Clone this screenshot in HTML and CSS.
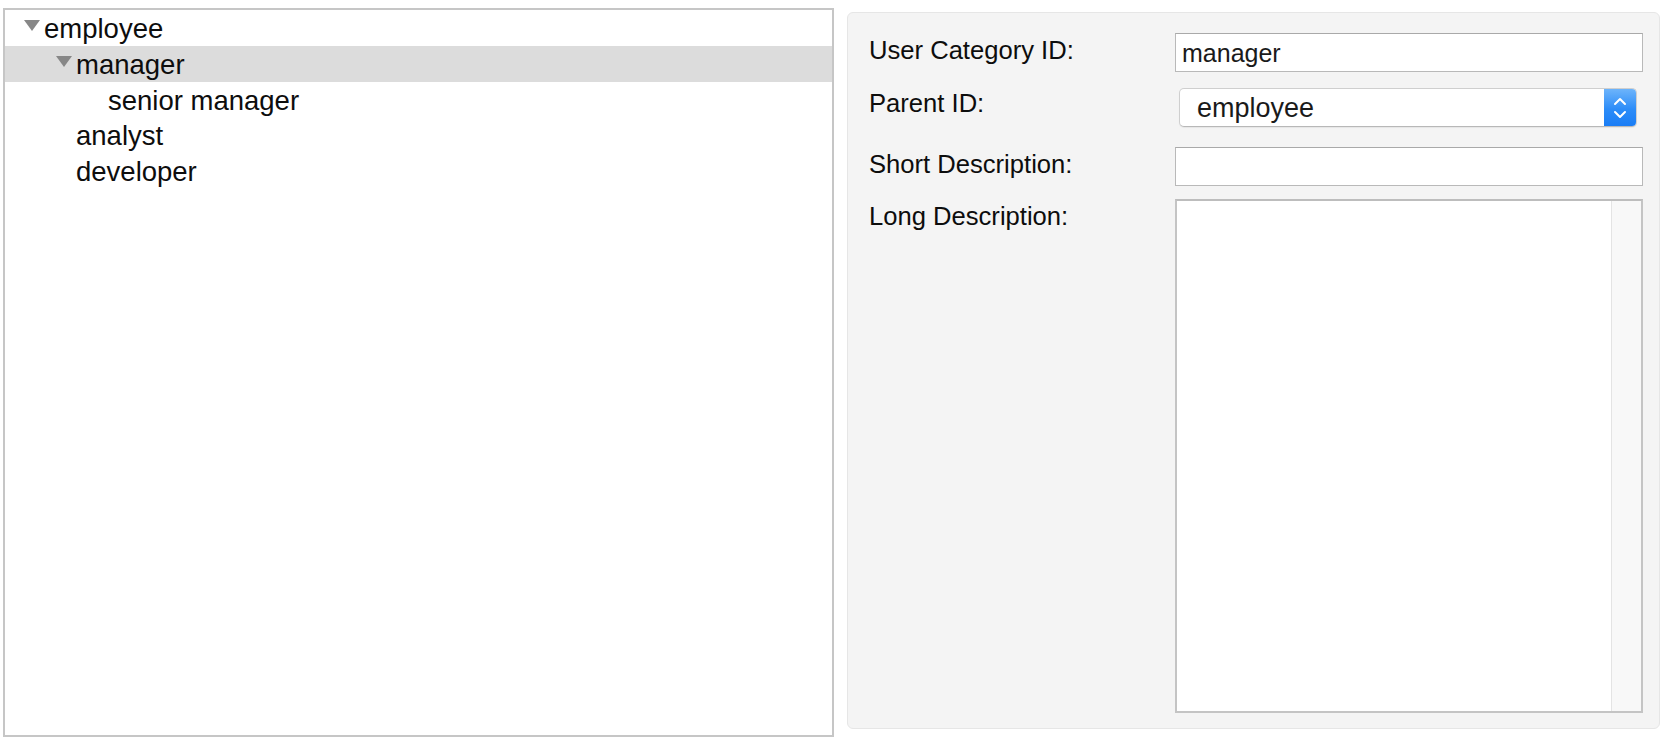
FILE: index.html
```html
<!DOCTYPE html>
<html>
<head>
<meta charset="utf-8">
<link rel="stylesheet" href="styles.css">
</head>
<body>
<div class="app">
  <div class="tree">
    <div class="row lvl0"><span class="disc open"></span><span class="label">employee</span></div>
    <div class="row lvl1 selected"><span class="disc open"></span><span class="label">manager</span></div>
    <div class="row lvl2"><span class="disc"></span><span class="label">senior manager</span></div>
    <div class="row lvl1"><span class="disc"></span><span class="label">analyst</span></div>
    <div class="row lvl1"><span class="disc"></span><span class="label">developer</span></div>
  </div>
  <div class="panel">
    <div class="form">
      <div class="flabel">User Category ID:</div>
      <div class="field f1"><div class="input">manager</div></div>

      <div class="flabel">Parent ID:</div>
      <div class="field f2">
        <div class="select">
          <span class="sel-text">employee</span>
          <span class="sel-btn">
            <svg width="14" height="26" viewBox="0 0 14 26"><path d="M2 9 L7 4 L12 9" fill="none" stroke="#fff" stroke-width="2" stroke-linecap="round" stroke-linejoin="round"/><path d="M2 17 L7 22 L12 17" fill="none" stroke="#fff" stroke-width="2" stroke-linecap="round" stroke-linejoin="round"/></svg>
          </span>
        </div>
      </div>

      <div class="flabel">Short Description:</div>
      <div class="field f3"><div class="input"></div></div>

      <div class="flabel">Long Description:</div>
      <div class="field f4"><div class="textarea"><div class="ta-body"></div><div class="ta-scroll"></div></div></div>
    </div>
  </div>
</div>
</body>
</html>
```
FILE: styles.css
```css
html, body {
  margin: 0;
  padding: 0;
  background: #ffffff;
  font-family: "Liberation Sans", Arial, Helvetica, sans-serif;
  color: #0d0d0d;
}

.app {
  display: flex;
  align-items: flex-start;
  gap: 13px;
  padding: 8px 0 0 3px;
}

.tree {
  box-sizing: border-box;
  width: 831px;
  height: 729px;
  border: 2px solid #c6c6c6;
  background: #ffffff;
}

.row {
  display: flex;
  align-items: center;
  height: 35.8px;
  font-size: 27.5px;
  color: #0d0d0d;
}

.row.lvl0 { padding-left: 19px; }
.row.lvl1 { padding-left: 51px; }
.row.lvl2 { padding-left: 83px; }

.row.selected { background: #dcdcdc; }

.disc {
  display: inline-block;
  width: 20px;
  height: 10px;
  flex: none;
}

.disc.open {
  width: 0;
  height: 0;
  border-left: 8px solid transparent;
  border-right: 8px solid transparent;
  border-top: 11px solid #878787;
  margin-right: 4px;
  margin-top: -5px;
}

.label {
  line-height: 35px;
  margin-top: 1px;
}

.panel {
  box-sizing: border-box;
  margin-top: 4px;
  width: 813px;
  height: 717px;
  background: #f4f4f4;
  border: 1px solid #e6e6e6;
  border-radius: 6px;
  padding: 20px 16px 0 21px;
}

.form {
  display: grid;
  grid-template-columns: 306px 468px;
  align-items: start;
}

.flabel {
  font-size: 25.6px;
  line-height: 30px;
  color: #0d0d0d;
  margin-top: 2px;
}

.field.f1 { margin-bottom: 14px; }
.field.f2 { margin-bottom: 20px; padding-top: 2px; }
.field.f3 { margin-bottom: 13px; }

.input {
  box-sizing: border-box;
  height: 39px;
  border: 1px solid #b9b9b9;
  border-top-color: #a9a9a9;
  background: #ffffff;
  font-size: 25px;
  line-height: 38px;
  padding-left: 6px;
  color: #1a1a1a;
}

.select {
  box-sizing: border-box;
  display: flex;
  margin-left: 4px;
  width: 458px;
  height: 39px;
  border-radius: 5px;
  background: #ffffff;
  border: 1px solid #cfcfcf;
  border-bottom-color: #b8b8b8;
  box-shadow: 0 1px 1px rgba(0,0,0,0.06);
  overflow: hidden;
}

.sel-text {
  flex: 1;
  font-size: 27px;
  line-height: 38px;
  padding-left: 17px;
  color: #1a1a1a;
}

.sel-btn {
  width: 32px;
  display: flex;
  align-items: center;
  justify-content: center;
  background: linear-gradient(#6db4fb, #2c8cf8 55%, #1a7df5);
}

.textarea {
  box-sizing: border-box;
  display: flex;
  height: 514px;
  border: 2px solid #c4c4c4;
  border-top-color: #bdbdbd;
  background: #ffffff;
}

.ta-body { flex: 1; }

.ta-scroll {
  width: 29px;
  background: #f8f8f8;
  border-left: 1px solid #e4e4e4;
}
```
